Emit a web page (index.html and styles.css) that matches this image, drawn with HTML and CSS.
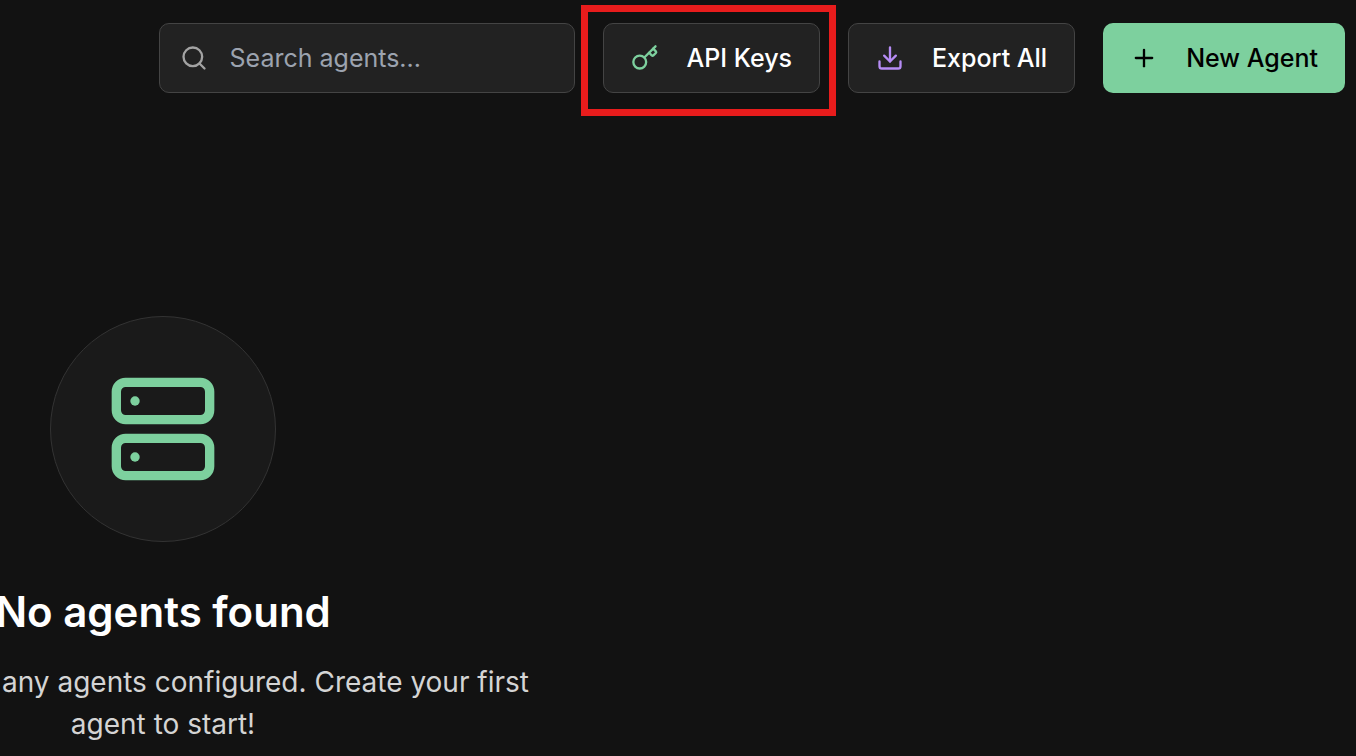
FILE: index.html
```
<!DOCTYPE html>
<html lang="en">
<head>
    <meta charset="UTF-8" />
    <title>Agents</title>
    <link rel="stylesheet" href="styles.css">
</head>
<body>
    <!-- Toolbar -->
    <header class="toolbar">
        <div class="search">
            <label for="search" aria-label="Search agents">
                <svg class="icon" viewBox="0 0 24 24"><circle cx="11" cy="11" r="8"/><path d="m21 21-4.3-4.3"/></svg>
            </label>
            <input type="text" id="search" placeholder="Search agents...">
        </div>
        <div class="highlight">
            <button type="button" class="btn">
                <svg class="icon green" viewBox="0 0 24 24"><circle cx="7.5" cy="15.5" r="5.5"/><path d="m21 2-9.6 9.6"/><path d="m15.5 7.5 2.3 2.3a1 1 0 0 0 1.4 0l2.1-2.1a1 1 0 0 0 0-1.4L19 4"/></svg>
                API Keys
            </button>
        </div>
        <button type="button" class="btn">
            <svg class="icon purple" viewBox="0 0 24 24"><path d="M21 15v4a2 2 0 0 1-2 2H5a2 2 0 0 1-2-2v-4"/><path d="m7 10 5 5 5-5"/><path d="M12 15V3"/></svg>
            Export All
        </button>
        <button type="button" class="btn primary">
            <svg class="icon" viewBox="0 0 24 24"><path d="M5 12h14"/><path d="M12 5v14"/></svg>
            New Agent
        </button>
    </header>

    <!-- Empty state -->
    <main class="empty">
        <div class="empty-icon">
            <svg viewBox="0 0 24 24"><rect x="2" y="2" width="20" height="8" rx="2"/><rect x="2" y="14" width="20" height="8" rx="2"/><path d="M6 6h.01"/><path d="M6 18h.01"/></svg>
        </div>
        <h2>No agents found</h2>
        <p><span class="line">any agents configured. Create your first</span> agent to start!</p>
    </main>
</body>
</html>
```
FILE: styles.css
```
* {
    box-sizing: border-box;
}

body {
    margin: 0;
    background-color: #121212;
    color: #ffffff;
    font-family: Inter, "Liberation Sans", sans-serif;
    overflow: hidden;
}

svg {
    display: block;
    fill: none;
    stroke: currentColor;
    stroke-width: 2;
    stroke-linecap: round;
    stroke-linejoin: round;
}

/* Toolbar */
.toolbar {
    display: flex;
    justify-content: flex-end;
    gap: 28px;
    padding: 23px 11px 0 0;
}

.icon {
    width: 28px;
    height: 28px;
    flex: none;
}

.green {
    color: #7dd09e;
}

.purple {
    color: #b68cf5;
}

.search {
    display: flex;
    align-items: center;
    gap: 22px;
    width: 416px;
    height: 70px;
    padding: 0 20px;
    background-color: #222222;
    border: 1px solid #444444;
    border-radius: 10px;
    color: #a3a3a3;
}

.search input {
    flex: 1;
    min-width: 0;
    padding: 0;
    background: none;
    border: none;
    outline: none;
    color: #ffffff;
    font-family: inherit;
    font-size: 25px;
}

.search input::placeholder {
    color: #9ca3af;
}

.btn {
    display: flex;
    align-items: center;
    gap: 28px;
    height: 70px;
    padding: 0 27px;
    background-color: #222222;
    border: 1px solid #444444;
    border-radius: 10px;
    color: #ffffff;
    font-family: inherit;
    font-size: 25px;
    font-weight: 500;
    white-space: nowrap;
    cursor: pointer;
}

.btn.primary {
    background-color: #7dd09e;
    border: none;
    color: #000000;
}

/* red frame around the API Keys button */
.highlight {
    position: relative;
}

.highlight::after {
    content: "";
    position: absolute;
    top: -18px;
    right: -16px;
    bottom: -23px;
    left: -22px;
    border: 7px solid #e81c1c;
    pointer-events: none;
}

/* Empty state */
.empty {
    display: flex;
    flex-direction: column;
    align-items: center;
    width: 326px;
    margin-top: 223px;
    text-align: center;
}

.empty-icon {
    display: flex;
    align-items: center;
    justify-content: center;
    width: 226px;
    height: 226px;
    background-color: #1a1a1a;
    border: 1px solid #333333;
    border-radius: 50%;
    color: #7dd09e;
}

.empty-icon svg {
    width: 112px;
    height: 112px;
}

.empty h2 {
    margin: 42px 0 21px;
    font-size: 42px;
    font-weight: 600;
    line-height: 56px;
    white-space: nowrap;
}

.empty p {
    width: 100%;
    margin: 0;
    color: #d4d4d4;
    font-size: 28px;
    line-height: 42px;
}

.line {
    display: block;
    padding-left: 2px;
    text-align: left;
    white-space: nowrap;
}
```
